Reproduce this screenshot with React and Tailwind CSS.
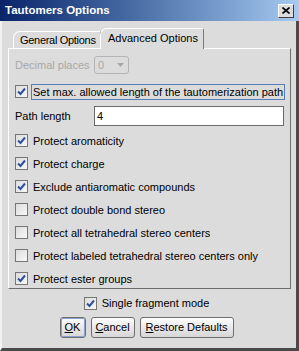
import React from "react";

function Check({ checked }) {
  return (
    <div className="w-[13px] h-[13px] border border-[#767676] bg-gradient-to-br from-[#dcdcdc] to-[#f8f8f8] flex items-center justify-center shrink-0">
      {checked && (
        <svg width="9" height="9" viewBox="0 0 9 9">
          <path d="M1 4.5 L3.5 7 L8 1.5" stroke="#2f4f9f" strokeWidth="2" fill="none" />
        </svg>
      )}
    </div>
  );
}

function Row({ checked, label, focus }) {
  return (
    <div className="flex items-center h-[23px]">
      <Check checked={checked} />
      <span
        className={
          "ml-[3px] px-[1px] leading-[14px] " +
          (focus ? "border border-[#5b7bb8] flex-1" : "border border-transparent")
        }
      >
        {label}
      </span>
    </div>
  );
}

function Btn({ children, focus, w }) {
  return (
    <div
      className={
        "h-[21px] rounded-[3px] border border-[#6e6e6e] bg-gradient-to-b from-[#fdfdfd] to-[#d6d6d6] flex items-center justify-center " +
        w
      }
    >
      <div className={"w-full h-full rounded-[2px] flex items-center justify-center " + (focus ? "border border-[#8aa0d0]" : "")}>
        {children}
      </div>
    </div>
  );
}

export default function App() {
  return (
    <div
      className="w-[299px] h-[351px] bg-[#dcdcdc] flex flex-col text-[11px] text-black overflow-hidden whitespace-nowrap"
      style={{ fontFamily: '"Liberation Sans", Arial, sans-serif' }}
    >
      {/* title bar */}
      <div className="h-[21px] shrink-0 flex items-center justify-between pl-[5px] pr-[5px] bg-gradient-to-r from-[#0a246a] to-[#a6caf0]">
        <span className="text-white font-bold text-[11.5px]">Tautomers Options</span>
        <div className="w-[16px] h-[14px] bg-[#dcdcdc] border border-t-white border-l-white border-r-[#404040] border-b-[#404040] flex items-center justify-center">
          <svg width="8" height="7" viewBox="0 0 8 7">
            <path d="M0.5 0.5 L7.5 6.5 M7.5 0.5 L0.5 6.5" stroke="#000" strokeWidth="1.6" />
          </svg>
        </div>
      </div>

      <div className="flex-1 flex flex-col border-l-2 border-l-[#f2f2f2] border-r-[3px] border-r-[#4a4a4a] border-b-[3px] border-b-[#4a4a4a] pl-[6px] pr-[5px]">
        {/* tabs */}
        <div className="flex items-end h-[27px] pl-[5px] relative z-10">
          <div className="h-[17px] w-[88px] rounded-tl-[7px] border border-b-0 border-l-white border-t-white border-r-[#7a7a7a] flex items-center pl-[6px] bg-[#dcdcdc] tracking-[-0.3px]">
            General Options
          </div>
          <div className="h-[21px] w-[104px] -ml-[1px] -mb-px rounded-tl-[7px] rounded-tr-[2px] border border-b-0 border-l-white border-t-white border-r-[#7a7a7a] flex items-center pl-[7px] pb-[1px] bg-[#dcdcdc]">
            Advanced Options
          </div>
        </div>

        {/* panel */}
        <div className="h-[241px] border border-t-white border-l-white border-r-[#6e6e6e] border-b-[#6e6e6e] pl-[6px] pr-[6px] pt-[7px] flex flex-col">
          <div className="flex items-center h-[18px]">
            <span className="text-[#a8a8a8] w-[79px]">Decimal places</span>
            <div className="w-[35px] h-[18px] rounded-[3px] border border-[#b4b4b4] flex items-center justify-between pl-[3px] pr-[4px] text-[#a8a8a8]">
              <span>0</span>
              <svg width="7" height="4" viewBox="0 0 7 4">
                <path d="M0 0 L7 0 L3.5 4 Z" fill="#a8a8a8" />
              </svg>
            </div>
          </div>
          <div className="mt-[6px]">
            <Row checked label="Set max. allowed length of the tautomerization path" focus />
          </div>
          <div className="flex items-center h-[20px] mt-[3px]">
            <span className="w-[79px]">Path length</span>
            <div className="flex-1 h-[20px] border border-[#6a6a6a] bg-white flex items-center pl-[2px]">4</div>
          </div>
          <div className="mt-[3px] flex flex-col">
            <Row checked label="Protect aromaticity" />
            <Row checked label="Protect charge" />
            <Row checked label="Exclude antiaromatic compounds" />
            <Row label="Protect double bond stereo" />
            <Row label="Protect all tetrahedral stereo centers" />
            <Row label="Protect labeled tetrahedral stereo centers only" />
            <Row checked label="Protect ester groups" />
          </div>
        </div>

        {/* single fragment */}
        <div className="flex items-center justify-center h-[15px] mt-[7px] pr-[6px]">
          <Check checked />
          <span className="ml-[5px]">Single fragment mode</span>
        </div>

        {/* buttons */}
        <div className="flex justify-center gap-[5px] mt-[6px] pr-[6px]">
          <Btn focus w="w-[26px]">
            <span><u>O</u>K</span>
          </Btn>
          <Btn w="w-[44px]">
            <span><u>C</u>ancel</span>
          </Btn>
          <Btn w="w-[94px]">
            <span><u>R</u>estore Defaults</span>
          </Btn>
        </div>
      </div>
    </div>
  );
}
